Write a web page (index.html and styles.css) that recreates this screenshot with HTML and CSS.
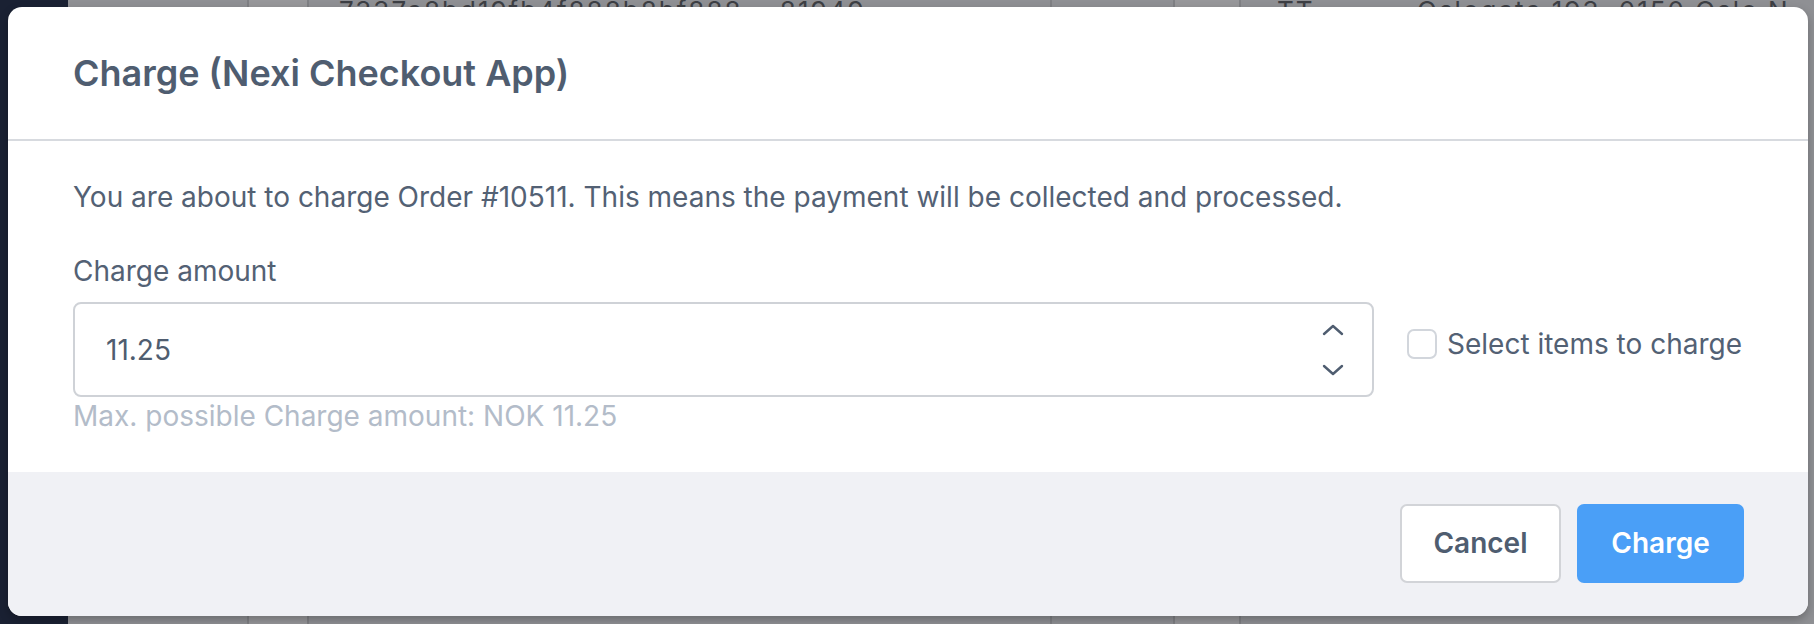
FILE: index.html
```html
<!DOCTYPE html>
<html lang="en">
<head>
<meta charset="utf-8">
<title>Charge (Nexi Checkout App)</title>
<link rel="stylesheet" href="styles.css">
</head>
<body>
<div class="backdrop">
  <div class="sidebar"></div>
  <div class="table">
    <div class="col c1"></div>
    <div class="col c2"></div>
    <div class="col c3"><span class="peek">7337e8bd19fb4f888b8bf888&nbsp;&nbsp;&nbsp;&nbsp;81949</span></div>
    <div class="col c4"></div>
    <div class="col c5"></div>
    <div class="col c6"><span class="peek">TT&nbsp;&nbsp;&nbsp;&nbsp;&nbsp;&nbsp;&nbsp;&nbsp;&nbsp;&nbsp;&nbsp;Oslogate 193, 0150 Oslo N</span></div>
  </div>
</div>

<div class="modal">
  <div class="modal-header">
    <h2 class="modal-title">Charge (Nexi Checkout App)</h2>
  </div>
  <div class="modal-body">
    <p class="intro">You are about to charge Order #10511. This means the payment will be collected and processed.</p>
    <label class="field-label" for="amount">Charge amount</label>
    <div class="field-row">
      <div class="number-input">
        <span class="value" id="amount">11.25</span>
        <div class="spinner">
          <svg width="22" height="12" viewBox="0 0 22 12"><path d="M2 10 L11 2 L20 10" fill="none" stroke="#4f5d70" stroke-width="2.4" stroke-linecap="round" stroke-linejoin="round"/></svg>
          <svg width="22" height="12" viewBox="0 0 22 12"><path d="M2 2 L11 10 L20 2" fill="none" stroke="#4f5d70" stroke-width="2.4" stroke-linecap="round" stroke-linejoin="round"/></svg>
        </div>
      </div>
      <label class="check">
        <span class="box"></span>
        <span class="check-text">Select items to charge</span>
      </label>
    </div>
    <p class="hint">Max. possible Charge amount: NOK 11.25</p>
  </div>
  <div class="modal-footer">
    <button class="btn btn-cancel">Cancel</button>
    <button class="btn btn-primary">Charge</button>
  </div>
</div>
</body>
</html>
```

FILE: styles.css
```css
* { box-sizing: border-box; }
html, body {
  margin: 0;
  padding: 0;
  width: 1814px;
  height: 624px;
  overflow: hidden;
  font-family: Inter, "Noto Sans", sans-serif;
}
body {
  background: #8f9094;
  position: relative;
}
.backdrop {
  display: flex;
  height: 624px;
}
.sidebar {
  width: 68px;
  background: #1a2133;
  flex: none;
}
.table {
  display: flex;
  flex: 1;
}
.col {
  height: 100%;
  border-right: 2px solid #7f8084;
  overflow: hidden;
  white-space: nowrap;
}
.c1 { width: 181px; }
.c2 { width: 60px; background: #97979a; }
.c3 { width: 743px; }
.c4 { width: 123px; }
.c5 { width: 66px; background: #97979a; }
.c6 { flex: 1; border-right: 0; }
.peek {
  display: block;
  margin-top: -2px;
  line-height: 26px;
  padding-left: 30px;
  font-size: 26px;
  color: #3d3f44;
  letter-spacing: 2px;
}
.c6 .peek { padding-left: 36px; }

.modal {
  position: absolute;
  left: 8px;
  top: 7px;
  width: 1800px;
  height: 609px;
  background: #ffffff;
  border-radius: 14px;
  overflow: hidden;
  display: flex;
  flex-direction: column;
  box-shadow: 0 4px 10px rgba(0,0,0,0.25);
}
.modal-header {
  height: 134px;
  border-bottom: 2px solid #d7dadf;
  display: flex;
  align-items: center;
  padding: 0 65px;
}
.modal-title {
  margin: 0;
  font-size: 36px;
  font-weight: 600;
  color: #4f5d70;
}
.modal-body {
  flex: 1;
  padding: 0 65px;
  color: #536174;
}
.intro {
  margin: 36px 0 0;
  font-size: 28px;
  line-height: 40px;
}
.field-label {
  display: block;
  margin-top: 34px;
  font-size: 28px;
  line-height: 40px;
}
.field-row {
  display: flex;
  align-items: center;
  margin-top: 11px;
}
.number-input {
  width: 1301px;
  height: 95px;
  border: 2px solid #cfd2d7;
  border-radius: 8px;
  display: flex;
  align-items: center;
  justify-content: space-between;
  padding: 0 28px 0 31px;
  flex: none;
}
.value {
  font-size: 28px;
  color: #4f5d70;
}
.spinner {
  display: flex;
  flex-direction: column;
  gap: 28px;
}
.check {
  display: flex;
  align-items: center;
  margin-left: 33px;
  margin-bottom: 12px;
  gap: 10px;
}
.box {
  width: 30px;
  height: 30px;
  border: 2px solid #d2d6dc;
  border-radius: 7px;
  background: #fff;
}
.check-text {
  font-size: 28px;
  color: #536174;
}
.hint {
  margin: 2px 0 0;
  font-size: 28px;
  line-height: 34px;
  color: #b3bcc9;
}
.modal-footer {
  height: 144px;
  background: #f0f1f5;
  display: flex;
  justify-content: flex-end;
  align-items: center;
  gap: 16px;
  padding: 0 64px 2px;
}
.btn {
  height: 79px;
  border-radius: 7px;
  font-family: Inter, "Noto Sans", sans-serif;
  font-size: 28px;
  font-weight: 600;
  padding: 0;
  cursor: pointer;
}
.btn-cancel {
  width: 161px;
  background: #ffffff;
  border: 2px solid #d2d4d8;
  color: #4f5d70;
}
.btn-primary {
  width: 167px;
  background: #4a9ff7;
  border: 0;
  color: #ffffff;
}
```
